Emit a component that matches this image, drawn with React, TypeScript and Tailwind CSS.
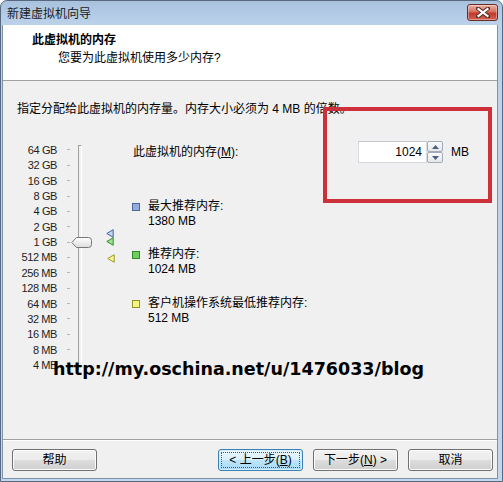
import React from "react";

const labels = [
  "64 GB", "32 GB", "16 GB", "8 GB", "4 GB", "2 GB", "1 GB",
  "512 MB", "256 MB", "128 MB", "64 MB", "32 MB", "16 MB", "8 MB", "4 MB",
];

function Tri({ stroke, fill }: { stroke: string; fill: string }) {
  return (
    <svg width="8" height="9" viewBox="0 0 8 9">
      <polygon points="7.2,0.7 0.8,4.5 7.2,8.3" fill={fill} stroke={stroke} strokeWidth="1" strokeLinejoin="round" />
    </svg>
  );
}

function Thumb() {
  return (
    <svg width="21" height="11" viewBox="0 0 21 11">
      <defs>
        <linearGradient id="tg" x1="0" y1="0" x2="0" y2="1">
          <stop offset="0" stopColor="#ffffff" />
          <stop offset="1" stopColor="#dcdcdc" />
        </linearGradient>
      </defs>
      <path d="M0.8 5.5 L5.5 0.5 H17.5 Q20.5 0.5 20.5 3.5 V7.5 Q20.5 10.5 17.5 10.5 H5.5 Z" fill="url(#tg)" stroke="#777" strokeWidth="1" />
    </svg>
  );
}

function SpinArrow({ up }: { up: boolean }) {
  return (
    <svg width="7" height="4" viewBox="0 0 7 4">
      <polygon points={up ? "0,4 3.5,0 7,4" : "0,0 3.5,4 7,0"} fill="#4c5f83" />
    </svg>
  );
}

function Btn({ children, focus }: { children: React.ReactNode; focus?: boolean }) {
  return (
    <div
      className={
        focus
          ? "w-[85px] h-[22px] rounded-[3px] border border-[#3c7fb1] bg-[linear-gradient(to_bottom,#eaf6fd_0%,#d9f0fc_50%,#bee6fd_51%,#a7d9f5_100%)] shadow-[inset_0_0_0_1px_#d3eefc] flex items-center justify-center p-[2px]"
          : "w-[85px] h-[22px] rounded-[3px] border border-[#707070] bg-[linear-gradient(to_bottom,#f2f2f2_0%,#ebebeb_50%,#dddddd_51%,#cfcfcf_100%)] shadow-[inset_0_0_0_1px_#fcfcfc] flex items-center justify-center p-[2px]"
      }
    >
      <div
        className={
          focus
            ? "w-full h-full flex items-center justify-center border border-dotted border-[#555] leading-[14px]"
            : "w-full h-full flex items-center justify-center leading-[14px]"
        }
      >
        {children}
      </div>
    </div>
  );
}

export default function App() {
  return (
    <div className="relative w-[503px] h-[482px] overflow-hidden bg-white font-['Liberation_Sans','Noto_Sans_CJK_SC',sans-serif] text-[12px] text-black">
      <div className="w-full h-full flex flex-col border border-[#56697f] rounded-t-[7px] bg-[linear-gradient(to_bottom,#a8c2df_0px,#bcd2ea_24px,#c2d6ec_100%)]">
        {/* title bar */}
        <div className="h-[24px] shrink-0 flex items-start pl-[6px] pr-[4px]">
          <span className="mt-[5px] leading-[16px] text-[#1b1b1b]">新建虚拟机向导</span>
          <div className="ml-auto mt-[3px] w-[31px] h-[17px] rounded-[3px] border border-[#6b2a22] bg-[linear-gradient(to_bottom,#eab2a6_0%,#d6705f_45%,#c0392a_55%,#d06453_100%)] shadow-[inset_0_0_0_1px_rgba(255,255,255,0.35)] flex items-center justify-center">
            <svg width="14" height="11" viewBox="0 0 14 11">
              <path d="M2 1.5 L12 9.5 M12 1.5 L2 9.5" stroke="#5a2a24" strokeWidth="4" strokeLinecap="square" />
              <path d="M2.5 2 L11.5 9 M11.5 2 L2.5 9" stroke="#ffffff" strokeWidth="2.2" strokeLinecap="square" />
            </svg>
          </div>
        </div>

        {/* client area */}
        <div className="flex-1 min-h-0 ml-[1px] mr-[4px] mb-[2px] flex flex-col border-x border-b border-[#7d92ad] bg-[#f0f0f0]">
          {/* header */}
          <div className="h-[56px] shrink-0 bg-white border-b border-[#a0a0a0] pt-[7px] pl-[29px]">
            <div className="leading-[16px] font-bold">此虚拟机的内存</div>
            <div className="mt-[2px] pl-[26px] leading-[16px]">您要为此虚拟机使用多少内存?</div>
          </div>

          {/* body */}
          <div className="flex-1 min-h-0 flex flex-col">
            <div className="mt-[20px] ml-[14px] leading-[16px]">
              指定分配给此虚拟机的内存量。内存大小必须为 4 MB 的倍数。
            </div>

            <div className="mt-[24px] flex">
              {/* slider */}
              <div className="relative w-[130px] h-[232px] shrink-0">
                <div className="pt-[1.3px] flex flex-col">
                  {labels.map((l) => (
                    <div key={l} className="h-[15.36px] flex items-center">
                      <span className="w-[54px] text-right text-[11px] tracking-[-0.4px] leading-[14px] text-[#1e1e1e]">{l}</span>
                      <span className="ml-[10px] w-[3px] h-px bg-[#b4b4b4]" />
                    </div>
                  ))}
                </div>
                <div className="absolute left-[75px] top-[4px] w-[4px] h-[226px] border-l border-t border-[#a0a0a0] border-r border-r-white border-b border-b-white" />
                <div className="absolute left-[68px] top-[96px] leading-none">
                  <Thumb />
                </div>
                <div className="absolute left-[103px] top-[88px] leading-none">
                  <Tri stroke="#3f63a6" fill="#c5d4ef" />
                </div>
                <div className="absolute left-[103px] top-[96px] leading-none">
                  <Tri stroke="#2f8f2f" fill="#9fe08f" />
                </div>
                <div className="absolute left-[104px] top-[113px] leading-none">
                  <Tri stroke="#9a9a22" fill="#f6f69a" />
                </div>
              </div>

              {/* right column */}
              <div className="flex flex-col">
                <div className="h-[22px] flex items-center">
                  <span className="w-[225px] leading-[16px]">
                    此虚拟机的内存(<span className="underline">M</span>):
                  </span>
                  <div className="w-[69px] h-[22px] bg-white border border-[#d6dae0] border-t-[#c2c7ce] flex items-center justify-end pr-[4px] leading-[16px]">
                    1024
                  </div>
                  <div className="w-[16px] h-[22px] flex flex-col">
                    <div className="h-[11px] rounded-[2px] border border-[#a3abb9] bg-[linear-gradient(to_bottom,#fbfbfb,#e4e6ea)] flex items-center justify-center">
                      <SpinArrow up />
                    </div>
                    <div className="h-[11px] rounded-[2px] border border-[#a3abb9] bg-[linear-gradient(to_bottom,#fbfbfb,#e4e6ea)] flex items-center justify-center">
                      <SpinArrow up={false} />
                    </div>
                  </div>
                  <span className="ml-[8px] leading-[16px]">MB</span>
                </div>

                <div className="mt-[36px] flex">
                  <span className="mt-[4px] ml-[-1px] w-[8px] h-[8px] shrink-0 border border-[#4a67a0] bg-[#94acd8]" />
                  <div className="ml-[8px] leading-[15px]">
                    <div>最大推荐内存:</div>
                    <div>1380 MB</div>
                  </div>
                </div>
                <div className="mt-[18px] flex">
                  <span className="mt-[4px] ml-[-1px] w-[8px] h-[8px] shrink-0 border border-[#2e8a2e] bg-[#6fcf5c]" />
                  <div className="ml-[8px] leading-[15px]">
                    <div>推荐内存:</div>
                    <div>1024 MB</div>
                  </div>
                </div>
                <div className="mt-[19px] flex">
                  <span className="mt-[4px] ml-[-1px] w-[8px] h-[8px] shrink-0 border border-[#8e8e2a] bg-[#f6f67e]" />
                  <div className="ml-[8px] leading-[15px]">
                    <div>客户机操作系统最低推荐内存:</div>
                    <div>512 MB</div>
                  </div>
                </div>
              </div>
            </div>
          </div>

          {/* footer */}
          <div className="h-[39px] shrink-0 border-t border-[#a0a0a0] shadow-[inset_0_1px_0_#ffffff] pt-[9px] pl-[9px] pr-[4px] flex items-start">
            <Btn>帮助</Btn>
            <div className="ml-auto flex gap-[10px]">
              <Btn focus>
                &lt; 上一步(<span className="underline">B</span>)
              </Btn>
              <Btn>
                下一步(<span className="underline">N</span>) &gt;
              </Btn>
              <Btn>取消</Btn>
            </div>
          </div>
        </div>
      </div>

      {/* annotation overlays */}
      <div className="absolute left-[323px] top-[107px] w-[169px] h-[96px] border-[4px] border-[#cd303b]" />
      <div className="absolute left-[53px] top-[359px] leading-[20px] text-[17.5px] font-bold font-['DejaVu_Sans',sans-serif] text-black whitespace-nowrap">
        http://my.oschina.net/u/1476033/blog
      </div>
    </div>
  );
}
